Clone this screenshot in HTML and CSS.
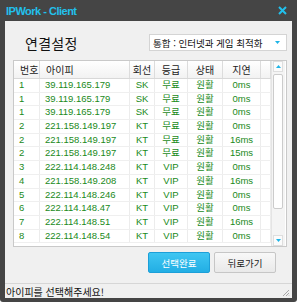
FILE: index.html
```html
<!DOCTYPE html>
<html lang="ko">
<head>
  <meta charset="UTF-8" />
  <title>IPWork - Client</title>
  <link rel="stylesheet" href="styles.css">
</head>
<body>
  <div class="window">
    <div class="titlebar">
      <span class="title">IPWork - Client</span>
      <svg class="close" width="9" height="9" viewBox="0 0 9 9">
        <path d="M1 1 L8 8 M8 1 L1 8" stroke="#22c0ec" stroke-width="2" fill="none"/>
      </svg>
    </div>

    <div class="client">
      <div class="top">
        <h1>연결설정</h1>
        <div class="combo">
          <span class="combo-text">통합 : 인터넷과 게임 최적화</span>
          <span class="combo-btn">
            <svg width="5" height="3" viewBox="0 0 5 3"><path d="M0 0 L5 0 L2.5 3 Z" fill="#1fb4e6"/></svg>
          </span>
        </div>
      </div>

      <div class="list">
        <div class="grid">
          <div class="row head">
            <div class="cell left">번호</div>
            <div class="cell left">아이피</div>
            <div class="cell">회선</div>
            <div class="cell">등급</div>
            <div class="cell">상태</div>
            <div class="cell">지연</div>
            <div class="cell"></div>
          </div>
          <div class="row"><div class="cell left">1</div><div class="cell left">39.119.165.179</div><div class="cell">SK</div><div class="cell">무료</div><div class="cell">원활</div><div class="cell">0ms</div><div class="cell"></div></div>
          <div class="row"><div class="cell left">1</div><div class="cell left">39.119.165.179</div><div class="cell">SK</div><div class="cell">무료</div><div class="cell">원활</div><div class="cell">0ms</div><div class="cell"></div></div>
          <div class="row"><div class="cell left">1</div><div class="cell left">39.119.165.179</div><div class="cell">SK</div><div class="cell">무료</div><div class="cell">원활</div><div class="cell">0ms</div><div class="cell"></div></div>
          <div class="row"><div class="cell left">2</div><div class="cell left">221.158.149.197</div><div class="cell">KT</div><div class="cell">무료</div><div class="cell">원활</div><div class="cell">0ms</div><div class="cell"></div></div>
          <div class="row"><div class="cell left">2</div><div class="cell left">221.158.149.197</div><div class="cell">KT</div><div class="cell">무료</div><div class="cell">원활</div><div class="cell">16ms</div><div class="cell"></div></div>
          <div class="row"><div class="cell left">2</div><div class="cell left">221.158.149.197</div><div class="cell">KT</div><div class="cell">무료</div><div class="cell">원활</div><div class="cell">15ms</div><div class="cell"></div></div>
          <div class="row"><div class="cell left">3</div><div class="cell left">222.114.148.248</div><div class="cell">KT</div><div class="cell">VIP</div><div class="cell">원활</div><div class="cell">0ms</div><div class="cell"></div></div>
          <div class="row"><div class="cell left">4</div><div class="cell left">221.158.149.208</div><div class="cell">KT</div><div class="cell">VIP</div><div class="cell">원활</div><div class="cell">16ms</div><div class="cell"></div></div>
          <div class="row"><div class="cell left">5</div><div class="cell left">222.114.148.246</div><div class="cell">KT</div><div class="cell">VIP</div><div class="cell">원활</div><div class="cell">0ms</div><div class="cell"></div></div>
          <div class="row"><div class="cell left">6</div><div class="cell left">222.114.148.47</div><div class="cell">KT</div><div class="cell">VIP</div><div class="cell">원활</div><div class="cell">0ms</div><div class="cell"></div></div>
          <div class="row"><div class="cell left">7</div><div class="cell left">222.114.148.51</div><div class="cell">KT</div><div class="cell">VIP</div><div class="cell">원활</div><div class="cell">16ms</div><div class="cell"></div></div>
          <div class="row"><div class="cell left">8</div><div class="cell left">222.114.148.54</div><div class="cell">KT</div><div class="cell">VIP</div><div class="cell">원활</div><div class="cell">0ms</div><div class="cell"></div></div>
        </div>
        <div class="scrollbar">
          <div class="sb-btn">
            <svg width="5" height="3" viewBox="0 0 5 3"><path d="M0 3 L5 3 L2.5 0 Z" fill="#1fb4e6"/></svg>
          </div>
          <div class="sb-track"><div class="sb-thumb"></div></div>
          <div class="sb-btn">
            <svg width="5" height="3" viewBox="0 0 5 3"><path d="M0 0 L5 0 L2.5 3 Z" fill="#1fb4e6"/></svg>
          </div>
        </div>
      </div>

      <div class="actions">
        <button class="btn primary">선택완료</button>
        <button class="btn">뒤로가기</button>
      </div>

      <div class="status">
        <span>아이피를 선택해주세요!</span>
        <svg class="grip" width="8" height="8" viewBox="0 0 8 8">
          <path d="M7 1 L1 7 M7 4 L4 7 M7 6.5 L6.5 7" stroke="#a8a8a8" stroke-width="1" fill="none"/>
        </svg>
      </div>
    </div>
  </div>
</body>
</html>
```

FILE: styles.css
```css
body {
  margin: 0;
  background: #ffffff;
  font-family: "Liberation Sans", "Noto Sans CJK KR", sans-serif;
}
.window {
  width: 297px;
  height: 302px;
  box-sizing: border-box;
  padding: 0 5px 4px 5px;
  background: #454545;
  border-radius: 0 0 3px 3px;
  display: flex;
  flex-direction: column;
}
.titlebar {
  height: 21px;
  display: flex;
  align-items: center;
  padding: 0 3px 0 1px;
}
.title {
  color: #22c0ec;
  font-weight: bold;
  font-size: 11px;
  letter-spacing: -0.5px;
}
.close {
  margin-left: auto;
  margin-right: 2px;
}
.client {
  flex: 1;
  background: #f0f0f0;
  display: flex;
  flex-direction: column;
}
.top {
  display: flex;
  align-items: center;
  margin-top: 13px;
  height: 17px;
}
h1 {
  margin: 0 0 0 20px;
  font-family: "Noto Sans CJK KR", sans-serif;
  font-size: 14px;
  font-weight: normal;
  color: #111;
  letter-spacing: 0.3px;
}
.combo {
  margin-left: auto;
  margin-right: 5px;
  width: 138px;
  height: 17px;
  box-sizing: border-box;
  border: 1px solid #d4d4d4;
  background: #fff;
  display: flex;
  align-items: center;
}
.combo-text {
  padding-left: 3px;
  font-family: "Noto Sans CJK KR", sans-serif;
  font-size: 9.5px;
  color: #111;
  white-space: nowrap;
}
.combo-btn {
  margin-left: auto;
  width: 13px;
  height: 13px;
  margin-right: 2px;
  display: flex;
  align-items: center;
  justify-content: center;
}
.list {
  margin: 9px 5px 0 8px;
  height: 187px;
  box-sizing: border-box;
  border: 1px solid #c9c9c9;
  background: #fff;
  display: flex;
}
.grid {
  width: 257px;
}
.row {
  display: grid;
  grid-template-columns: 26px 90px 25px 33px 35px 38px 10px;
  height: 13.7px;
  box-sizing: border-box;
  border-bottom: 1px solid #efefef;
  font-size: 9.5px;
  color: #1a8a1a;
  font-family: "Liberation Sans", "Noto Sans CJK KR", sans-serif;
}
.cell {
  border-right: 1px solid #ececec;
  text-align: center;
  line-height: 12.7px;
  white-space: nowrap;
  overflow: hidden;
}
.cell.left {
  text-align: left;
  padding-left: 5px;
}
.row.head {
  height: 18px;
  background: linear-gradient(#ffffff, #f2f2f2);
  border-bottom: 1px solid #d8d8d8;
  color: #222;
  font-family: "Noto Sans CJK KR", sans-serif;
  font-size: 10px;
}
.row.head .cell {
  line-height: 17px;
  border-right: 1px solid #dcdcdc;
}
.row.head .cell.left {
  padding-left: 6px;
}
.scrollbar {
  width: 14px;
  background: #f4f4f4;
  border-left: 1px solid #e4e4e4;
  box-sizing: border-box;
  display: flex;
  flex-direction: column;
  padding: 0 2px 0 1px;
}
.sb-btn {
  height: 11px;
  display: flex;
  align-items: center;
  justify-content: center;
  border: 1px solid #dedede;
  background: #fbfbfb;
  box-sizing: border-box;
}
.sb-track {
  flex: 1;
  padding: 2px 0 26px;
  display: flex;
}
.sb-thumb {
  flex: 1;
  background: #fefefe;
  border: 1px solid #cbcbcb;
  border-radius: 2px;
}
.actions {
  display: flex;
  justify-content: flex-end;
  gap: 4px;
  margin-top: 5px;
  padding-right: 16px;
}
.btn {
  width: 62px;
  height: 21px;
  padding: 0;
  border: 1px solid #c6c6c6;
  border-radius: 2px;
  background: linear-gradient(#f8f8f8, #e9e9e9);
  font-family: "Noto Sans CJK KR", sans-serif;
  font-size: 9.5px;
  color: #222;
}
.btn.primary {
  border-color: #1c9fd8;
  background: linear-gradient(#3fc6f2, #22aee4);
  color: #fff;
}
.status {
  margin-top: auto;
  height: 15px;
  box-sizing: border-box;
  border-top: 1px solid #d6d6d6;
  display: flex;
  align-items: center;
  padding: 0 2px 0 1px;
  font-family: "Noto Sans CJK KR", sans-serif;
  font-size: 10px;
  color: #111;
}
.grip {
  margin-left: auto;
  align-self: flex-end;
  margin-bottom: 1px;
}
```
